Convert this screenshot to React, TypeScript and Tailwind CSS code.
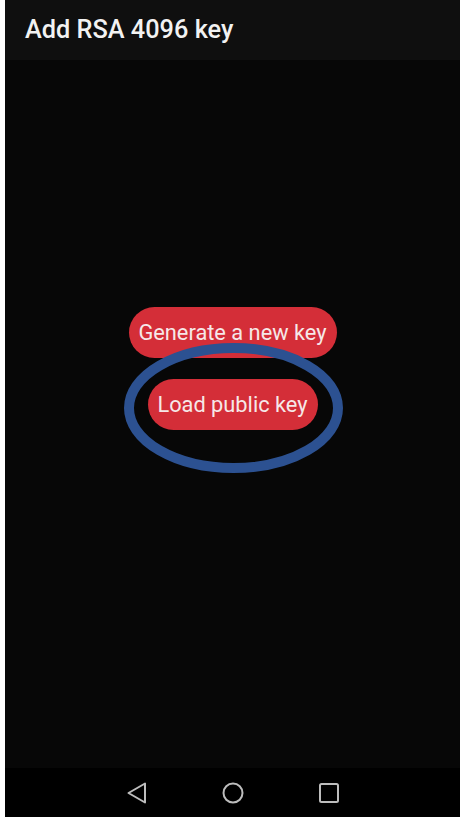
import React from "react";

export default function App() {
  return (
    <div
      className="w-[462px] h-[817px] bg-white pl-[5px] pr-[2px] flex"
      style={{ fontFamily: "Roboto, 'Noto Sans', sans-serif" }}
    >
      <div className="flex-1 flex flex-col">
        <div className="h-[60px] bg-[#0f0f0f] flex items-center pl-[20px]">
          <span className="text-[25.3px] font-medium text-[#f2f2f2] leading-none">
            Add RSA 4096 key
          </span>
        </div>
        <div className="flex-1 bg-[#070707] flex flex-col items-center pt-[247px] gap-[21px]">
          <button className="h-[51px] w-[208px] rounded-full bg-[#d42e38] text-[#f6e8e8] text-[21.8px] leading-none">
            Generate a new key
          </button>
          <div className="relative">
            <button className="h-[51px] w-[170px] rounded-full bg-[#d42e38] text-[#f6e8e8] text-[21.8px] leading-none">
              Load public key
            </button>
            <svg
              className="absolute left-[-24px] top-[-36px]"
              width="219"
              height="130"
              viewBox="0 0 219 130"
            >
              <ellipse cx="109.5" cy="65" rx="104.5" ry="60" fill="none" stroke="#2c5191" strokeWidth="10" />
            </svg>
          </div>
        </div>
        <div className="h-[49px] bg-black flex items-center justify-center">
          <div className="flex items-center justify-center w-[96px]">
            <svg width="22" height="22" viewBox="0 0 22 22">
              <path d="M19 1.5 L19 20.5 L2.5 11 Z" fill="none" stroke="#bdbdbd" strokeWidth="2" strokeLinejoin="round" />
            </svg>
          </div>
          <div className="flex items-center justify-center w-[96px]">
            <svg width="22" height="22" viewBox="0 0 22 22">
              <circle cx="11" cy="11" r="9.5" fill="none" stroke="#bdbdbd" strokeWidth="2" />
            </svg>
          </div>
          <div className="flex items-center justify-center w-[96px]">
            <svg width="22" height="22" viewBox="0 0 22 22">
              <rect x="2" y="2" width="18" height="18" rx="1.5" fill="none" stroke="#bdbdbd" strokeWidth="2" />
            </svg>
          </div>
        </div>
      </div>
    </div>
  );
}
